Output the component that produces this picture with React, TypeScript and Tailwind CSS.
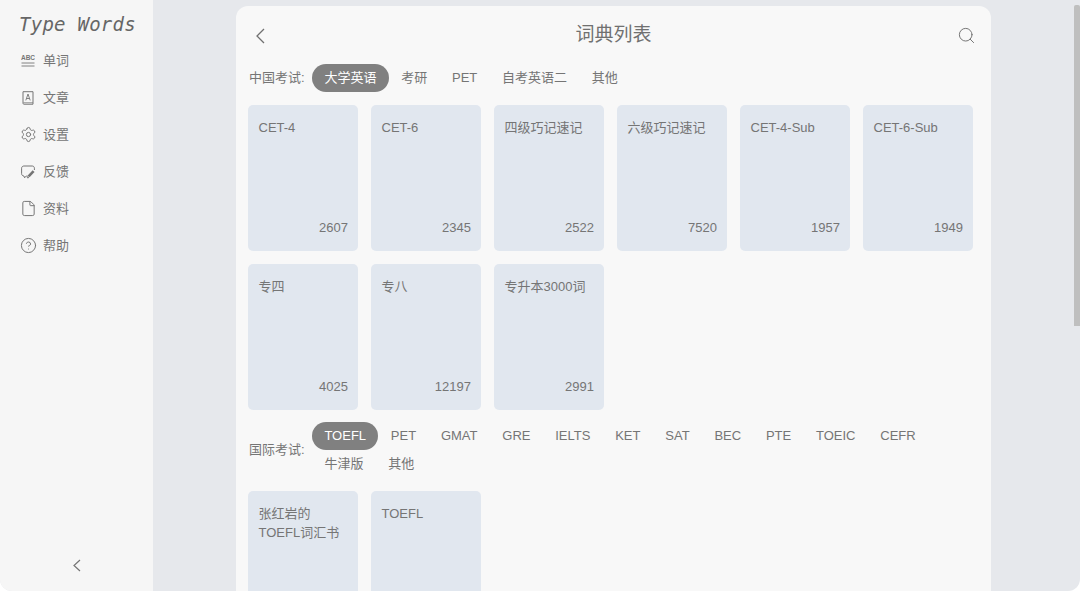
import { Search, Settings, File, CircleHelp } from "lucide-react";

const font = { fontFamily: "'Liberation Sans', 'Noto Sans CJK SC', sans-serif" };

function AbcIcon() {
  return (
    <svg width="14" height="14" viewBox="0 0 14 14" fill="none" stroke="currentColor" className="shrink-0">
      <text x="7" y="6.2" textAnchor="middle" fontSize="6.5" fontWeight="700" fill="currentColor" stroke="none" fontFamily="'Liberation Sans', sans-serif">ABC</text>
      <path d="M0.5 9H13.5M0.5 12H13.5" strokeWidth="0.9" />
    </svg>
  );
}

function BookAIcon() {
  return (
    <svg width="14" height="14" viewBox="0 0 14 14" fill="none" stroke="currentColor" strokeWidth="1" className="shrink-0">
      <path d="M2 12.3V0.7H12V13.2H2.9C2.4 13.2 2 12.8 2 12.3Z" />
      <path d="M2.4 11.7H12" strokeWidth="0.7" />
      <path d="M4.8 9.4L7 3L9.2 9.4M5.5 7.5H8.5" strokeWidth="0.9" />
    </svg>
  );
}

function NoteIcon() {
  return (
    <svg width="14" height="14" viewBox="0 0 14 14" fill="none" stroke="currentColor" strokeWidth="1" className="shrink-0">
      <path d="M6.5 11H5.3L3.6 12.8L2.9 11C1.6 10.9 0.6 10 0.6 8.7V3.2C0.6 2 1.6 1 2.8 1H11.3C12.5 1 13.4 2 13.4 3.2V5" />
      <path d="M12.6 6.1L7.6 11.3" strokeWidth="2.6" />
      <path d="M6.2 13L6.7 11.4L8 12.6Z" fill="currentColor" strokeWidth="0.6" />
    </svg>
  );
}

function Chevron({ w, h, sw }: { w: number; h: number; sw: number }) {
  return (
    <svg width={w + 2} height={h + 2} viewBox={`0 0 ${w + 2} ${h + 2}`} fill="none" stroke="currentColor" strokeWidth={sw}>
      <path d={`M${w + 1} 1L1 ${h / 2 + 1}L${w + 1} ${h + 1}`} />
    </svg>
  );
}

const nav = [
  { label: "单词", icon: <AbcIcon /> },
  { label: "文章", icon: <BookAIcon /> },
  { label: "设置", icon: <Settings size={17} strokeWidth={1.4} className="shrink-0" /> },
  { label: "反馈", icon: <NoteIcon /> },
  { label: "资料", icon: <File size={17} strokeWidth={1.4} className="shrink-0" /> },
  { label: "帮助", icon: <CircleHelp size={17} strokeWidth={1.4} className="shrink-0" /> },
];

function Pill({ label, active }: { label: string; active?: boolean }) {
  return (
    <span
      className={
        "h-[28px] px-[12.4px] rounded-full flex items-center text-[13px] " +
        (active ? "bg-[#808080] text-white" : "text-[#757575]")
      }
    >
      {label}
    </span>
  );
}

function TabRow({ title, items }: { title: string; items: string[] }) {
  return (
    <div className="flex items-center">
      <span className="w-[64px] shrink-0 pl-px text-[13px] text-[#757575]">{title}</span>
      <div className="flex flex-wrap flex-1">
        {items.map((item, i) => (
          <Pill key={item} label={item} active={i === 0} />
        ))}
      </div>
    </div>
  );
}

function DictCard({ name, count }: { name: string; count?: string }) {
  return (
    <div className="h-[146px] rounded-[5px] bg-[#e1e7ef] pl-[10.5px] pr-[10px] pt-[13px] pb-[14px] flex flex-col justify-between text-[13px] leading-[19px] text-[#757575]">
      <div>{name}</div>
      {count && <div className="text-right">{count}</div>}
    </div>
  );
}

function CardGrid({ cards }: { cards: [string, string?][] }) {
  return (
    <div className="grid grid-cols-6 gap-[13px]">
      {cards.map(([n, c]) => (
        <DictCard key={n} name={n} count={c} />
      ))}
    </div>
  );
}

export default function App() {
  return (
    <div style={font} className="relative h-screen w-full overflow-hidden bg-white">
      <div className="flex h-full rounded-b-xl overflow-hidden bg-[#e6e8ec]">
        <aside className="w-[153px] shrink-0 bg-[#f6f6f6] flex flex-col items-stretch text-[#757575]">
          <div
            className="pl-[19px] pt-[10px] h-[42px] text-[19px] leading-[28px] tracking-[0.25px] italic whitespace-nowrap text-[#666]"
            style={{ fontFamily: "'DejaVu Sans Mono', monospace" }}
          >
            Type Words
          </div>
          <nav className="flex flex-col">
            {nav.map((n) => (
              <div key={n.label} className="h-[37px] flex items-center pl-[21px] gap-[8px] text-[13px]">
                <span className="w-[14px] flex justify-center">{n.icon}</span>
                <span>{n.label}</span>
              </div>
            ))}
          </nav>
          <div className="mt-auto h-[52px] flex justify-center items-center">
            <Chevron w={6} h={11} sw={1.2} />
          </div>
        </aside>
        <main className="flex-1 flex justify-center pr-[6px] pt-[6px]">
          <div className="w-[755px] h-[800px] shrink-0 rounded-t-xl bg-[#f8f8f8] px-[12px]">
            <header className="h-[58px] grid grid-cols-3 items-center text-[#707070]">
              <span className="pl-[8px] pt-[1px] flex"><Chevron w={7} h={14} sw={1.3} /></span>
              <h1 className="text-[19px] font-normal text-center pt-[1px]">词典列表</h1>
              <span className="flex justify-end pr-[3px]"><Search size={19} strokeWidth={1.2} /></span>
            </header>
            <div className="pr-[6px]">
              <TabRow title="中国考试:" items={["大学英语", "考研", "PET", "自考英语二", "其他"]} />
              <div className="mt-[13px]">
                <CardGrid
                  cards={[
                    ["CET-4", "2607"],
                    ["CET-6", "2345"],
                    ["四级巧记速记", "2522"],
                    ["六级巧记速记", "7520"],
                    ["CET-4-Sub", "1957"],
                    ["CET-6-Sub", "1949"],
                    ["专四", "4025"],
                    ["专八", "12197"],
                    ["专升本3000词", "2991"],
                  ]}
                />
              </div>
              <div className="mt-[12px]">
                <TabRow
                  title="国际考试:"
                  items={["TOEFL", "PET", "GMAT", "GRE", "IELTS", "KET", "SAT", "BEC", "PTE", "TOEIC", "CEFR", "牛津版", "其他"]}
                />
              </div>
              <div className="mt-[13px]">
                <CardGrid cards={[["张红岩的 TOEFL词汇书"], ["TOEFL"]]} />
              </div>
            </div>
          </div>
        </main>
      </div>
      <div className="absolute right-0 top-[5px] w-[6px] h-[321px] rounded-t-[2px] bg-[#bfbfbf]" />
    </div>
  );
}
